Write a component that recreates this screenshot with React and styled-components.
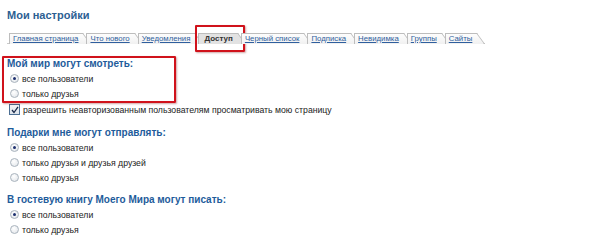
import React from "react";
import styled, { createGlobalStyle, css } from "styled-components";

const Global = createGlobalStyle`
  html, body { margin: 0; padding: 0; background: #ffffff; }
  body { font-family: "Liberation Sans", Arial, sans-serif; color: #222; }
`;

const Page = styled.div`
  padding: 7px 0 0 7px;
  width: 593px;
  height: 239px;
  overflow: hidden;
`;

const Title = styled.div`
  font-size: 11px;
  font-weight: bold;
  line-height: 16px;
  color: #2d5f93;
`;

const TabBar = styled.div`
  display: flex;
  margin-top: 10px;
  width: 478px;
  padding-left: 2px;
  box-sizing: border-box;
  border-bottom: 1px solid #c9c9c9;
  height: 11px;
`;

const tabBg = (active) => (active ? "#e2e2e2" : "linear-gradient(#fdfdfd, #f1f1f1)");

const Tab = styled.span`
  position: relative;
  display: inline-flex;
  align-items: center;
  height: 11px;
  padding: 1px 4px 0 4px;
  box-sizing: border-box;
  font-size: 7.8px;
  line-height: 10px;
  color: #2f5f9e;
  text-decoration: underline;
  white-space: nowrap;
  &::before {
    content: "";
    position: absolute;
    top: 0; left: 0; bottom: 0; right: 0;
    border-top: 1px solid #bdbdbd;
    border-left: 1px solid #bdbdbd;
    background: ${(p) => tabBg(p.$active)};
    z-index: -1;
  }
  &::after {
    content: "";
    position: absolute;
    top: 0; bottom: 0; right: -1px;
    width: 8px;
    border-top: 1px solid #bdbdbd;
    border-right: 1px solid #bdbdbd;
    background: ${(p) => tabBg(p.$active)};
    transform: skewX(36deg);
    transform-origin: top left;
    z-index: -1;
  }
  ${(p) =>
    p.$active &&
    css`
      color: #333;
      font-size: 8px;
      font-weight: bold;
      text-decoration: none;
      padding: 1px 4px 0 6px;
    `}
`;

const TabItem = styled.span`
  position: relative;
  display: inline-flex;
  isolation: isolate;
  margin-right: 4px;
`;

const Marked = styled(TabItem)`
  &::after {
    content: "";
    position: absolute;
    left: -3px;
    right: -8px;
    top: -8px;
    bottom: -9px;
    border: 2px solid #d0121b;
    border-radius: 1px;
    box-shadow: 1px 1px 2px rgba(120, 0, 0, 0.35);
    pointer-events: none;
  }
`;

const Section = styled.div`
  margin-top: ${(p) => p.$mt}px;
`;

const HighlightBox = styled.div`
  position: relative;
  &::after {
    content: "";
    position: absolute;
    left: -5px;
    top: -1px;
    width: 170px;
    height: 43px;
    border: 2px solid #d0121b;
    border-radius: 1px;
    box-shadow: 1px 1px 2px rgba(120, 0, 0, 0.35);
    pointer-events: none;
  }
`;

const Heading = styled.div`
  font-size: 10px;
  font-weight: bold;
  line-height: 14px;
  color: #1e5c9b;
`;

const Option = styled.label`
  display: flex;
  align-items: center;
  gap: 3px;
  height: ${(p) => p.$h || 15}px;
  padding-left: 3px;
  font-size: 8.7px;
  color: #222;
`;

const Radio = styled.span`
  width: 7px;
  height: 7px;
  border-radius: 50%;
  border: 1px solid #a9b3bd;
  background: radial-gradient(circle at 40% 35%, #ffffff, #dfe3e8);
  position: relative;
  flex: none;
  ${(p) =>
    p.$checked &&
    css`
      &::after {
        content: "";
        position: absolute;
        left: 2px;
        top: 2px;
        width: 3px;
        height: 3px;
        border-radius: 50%;
        background: #1d2f6e;
      }
    `}
`;

const Check = styled.span`
  width: 9px;
  height: 9px;
  border: 1px solid #4c6f93;
  background: linear-gradient(#f4f6f8, #dde3ea);
  flex: none;
  display: flex;
  align-items: center;
  justify-content: center;
  margin-left: -1px;
`;

const tabs = [
  { t: "Главная страница" },
  { t: "Что нового" },
  { t: "Уведомления" },
  { t: "Доступ", active: true },
  { t: "Черный список" },
  { t: "Подписка" },
  { t: "Невидимка" },
  { t: "Группы" },
  { t: "Сайты" },
];

function RadioRow({ checked, children }) {
  return (
    <Option>
      <Radio $checked={checked} />
      {children}
    </Option>
  );
}

export default function App() {
  return (
    <>
      <Global />
      <Page>
        <Title>Мои настройки</Title>
        <TabBar>
          {tabs.map(({ t, active }) =>
            active ? (
              <Marked key={t}>
                <Tab $active>{t}</Tab>
              </Marked>
            ) : (
              <TabItem key={t}>
                <Tab>{t}</Tab>
              </TabItem>
            )
          )}
        </TabBar>

        <Section $mt={13}>
          <HighlightBox>
            <Heading>Мой мир могут смотреть:</Heading>
            <RadioRow checked>все пользователи</RadioRow>
            <RadioRow>только друзья</RadioRow>
          </HighlightBox>
          <Option $h={17}>
            <Check>
              <svg width="8" height="8" viewBox="0 0 8 8">
                <path d="M1 4 L3 6.5 L7 0.8" fill="none" stroke="#1a2a4a" strokeWidth="1.3" />
              </svg>
            </Check>
            разрешить неавторизованным пользователям просматривать мою страницу
          </Option>
        </Section>

        <Section $mt={8}>
          <Heading>Подарки мне могут отправлять:</Heading>
          <RadioRow checked>все пользователи</RadioRow>
          <RadioRow>только друзья и друзья друзей</RadioRow>
          <RadioRow>только друзья</RadioRow>
        </Section>

        <Section $mt={8}>
          <Heading>В гостевую книгу Моего Мира могут писать:</Heading>
          <RadioRow checked>все пользователи</RadioRow>
          <RadioRow>только друзья</RadioRow>
        </Section>
      </Page>
    </>
  );
}
